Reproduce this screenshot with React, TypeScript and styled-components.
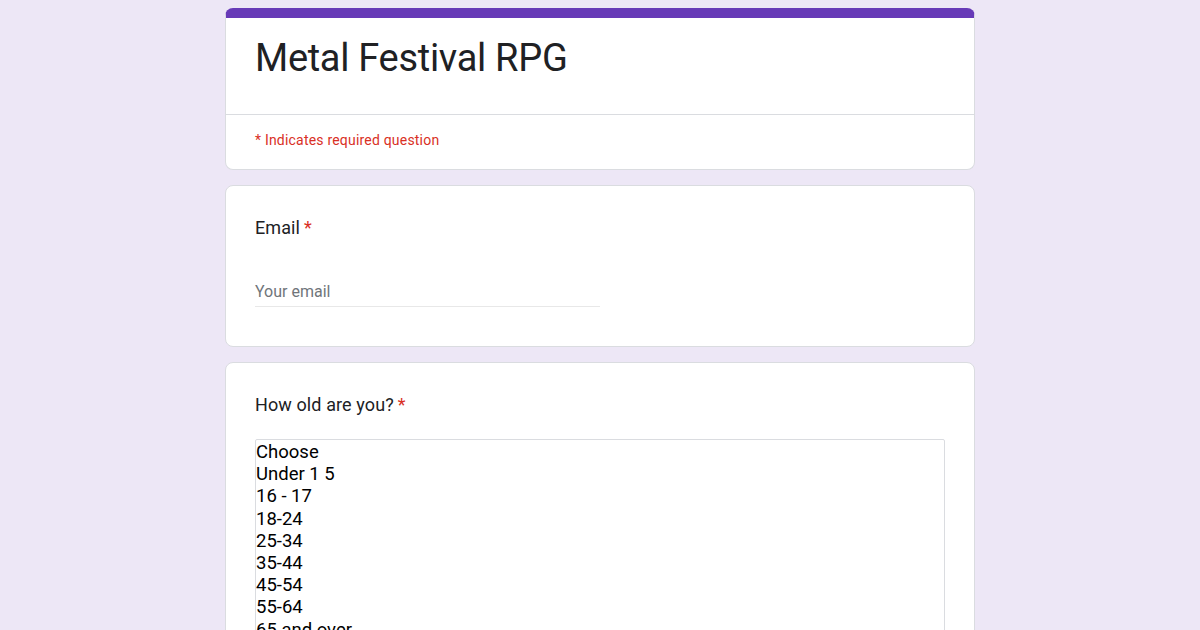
import styled, { createGlobalStyle } from "styled-components"

const Global = createGlobalStyle`
	body {
		margin: 0;
		background: #ede7f6;
		font-family: Roboto, "Noto Sans", sans-serif;
		color: #202124;
	}
`

const Page = styled.div`
	width: 750px;
	margin: 0 auto;
	padding-top: 8px;
	display: flex;
	flex-direction: column;
	gap: 15px;
`

const Card = styled.div<{ accent?: boolean }>`
	background: #fff;
	border: 1px solid #dadce0;
	border-radius: 8px;
	overflow: hidden;
	${(p) => (p.accent ? "border-top: 10px solid #673ab7;" : "")}
`

const TitleBlock = styled.div`
	padding: 18px 29px 33px;
	border-bottom: 1px solid #dadce0;
	font-size: 38px;
	line-height: 45px;
	letter-spacing: -0.3px;
`

const Required = styled.div`
	padding: 17px 29px 21px;
	font-size: 14px;
	color: #d93025;
	letter-spacing: 0.2px;
`

const Question = styled.div`
	padding: 30px 29px 39px;
`

const Label = styled.div`
	font-size: 18px;
	line-height: 24px;
	letter-spacing: 0.1px;
`

const Star = styled.span`
	color: #d93025;
	margin-left: 4px;
`

const EmailInput = styled.div`
	margin-top: 42px;
	width: 345px;
	border-bottom: 1px solid #e8e8e8;
	padding-bottom: 5px;
	font-size: 16px;
	color: #70757a;
`

const ListBox = styled.div`
	margin-top: 22px;
	border: 1px solid #dadce0;
	border-radius: 2px;
	padding: 1px 0 0;
	height: 260px;
	font-size: 18.5px;
	line-height: 22.2px;
	color: #000;
`

const options = ["Choose", "Under 1 5", "16 - 17", "18-24", "25-34", "35-44", "45-54", "55-64", "65 and over"]

export default function App() {
	return (
		<>
			<Global />
			<Page>
				<Card accent>
					<TitleBlock>Metal Festival RPG</TitleBlock>
					<Required>* Indicates required question</Required>
				</Card>
				<Card>
					<Question>
						<Label>
							Email<Star>*</Star>
						</Label>
						<EmailInput>Your email</EmailInput>
					</Question>
				</Card>
				<Card>
					<Question>
						<Label>
							How old are you?<Star>*</Star>
						</Label>
						<ListBox>
							{options.map((o) => (
								<div key={o}>{o}</div>
							))}
						</ListBox>
					</Question>
				</Card>
			</Page>
		</>
	)
}
